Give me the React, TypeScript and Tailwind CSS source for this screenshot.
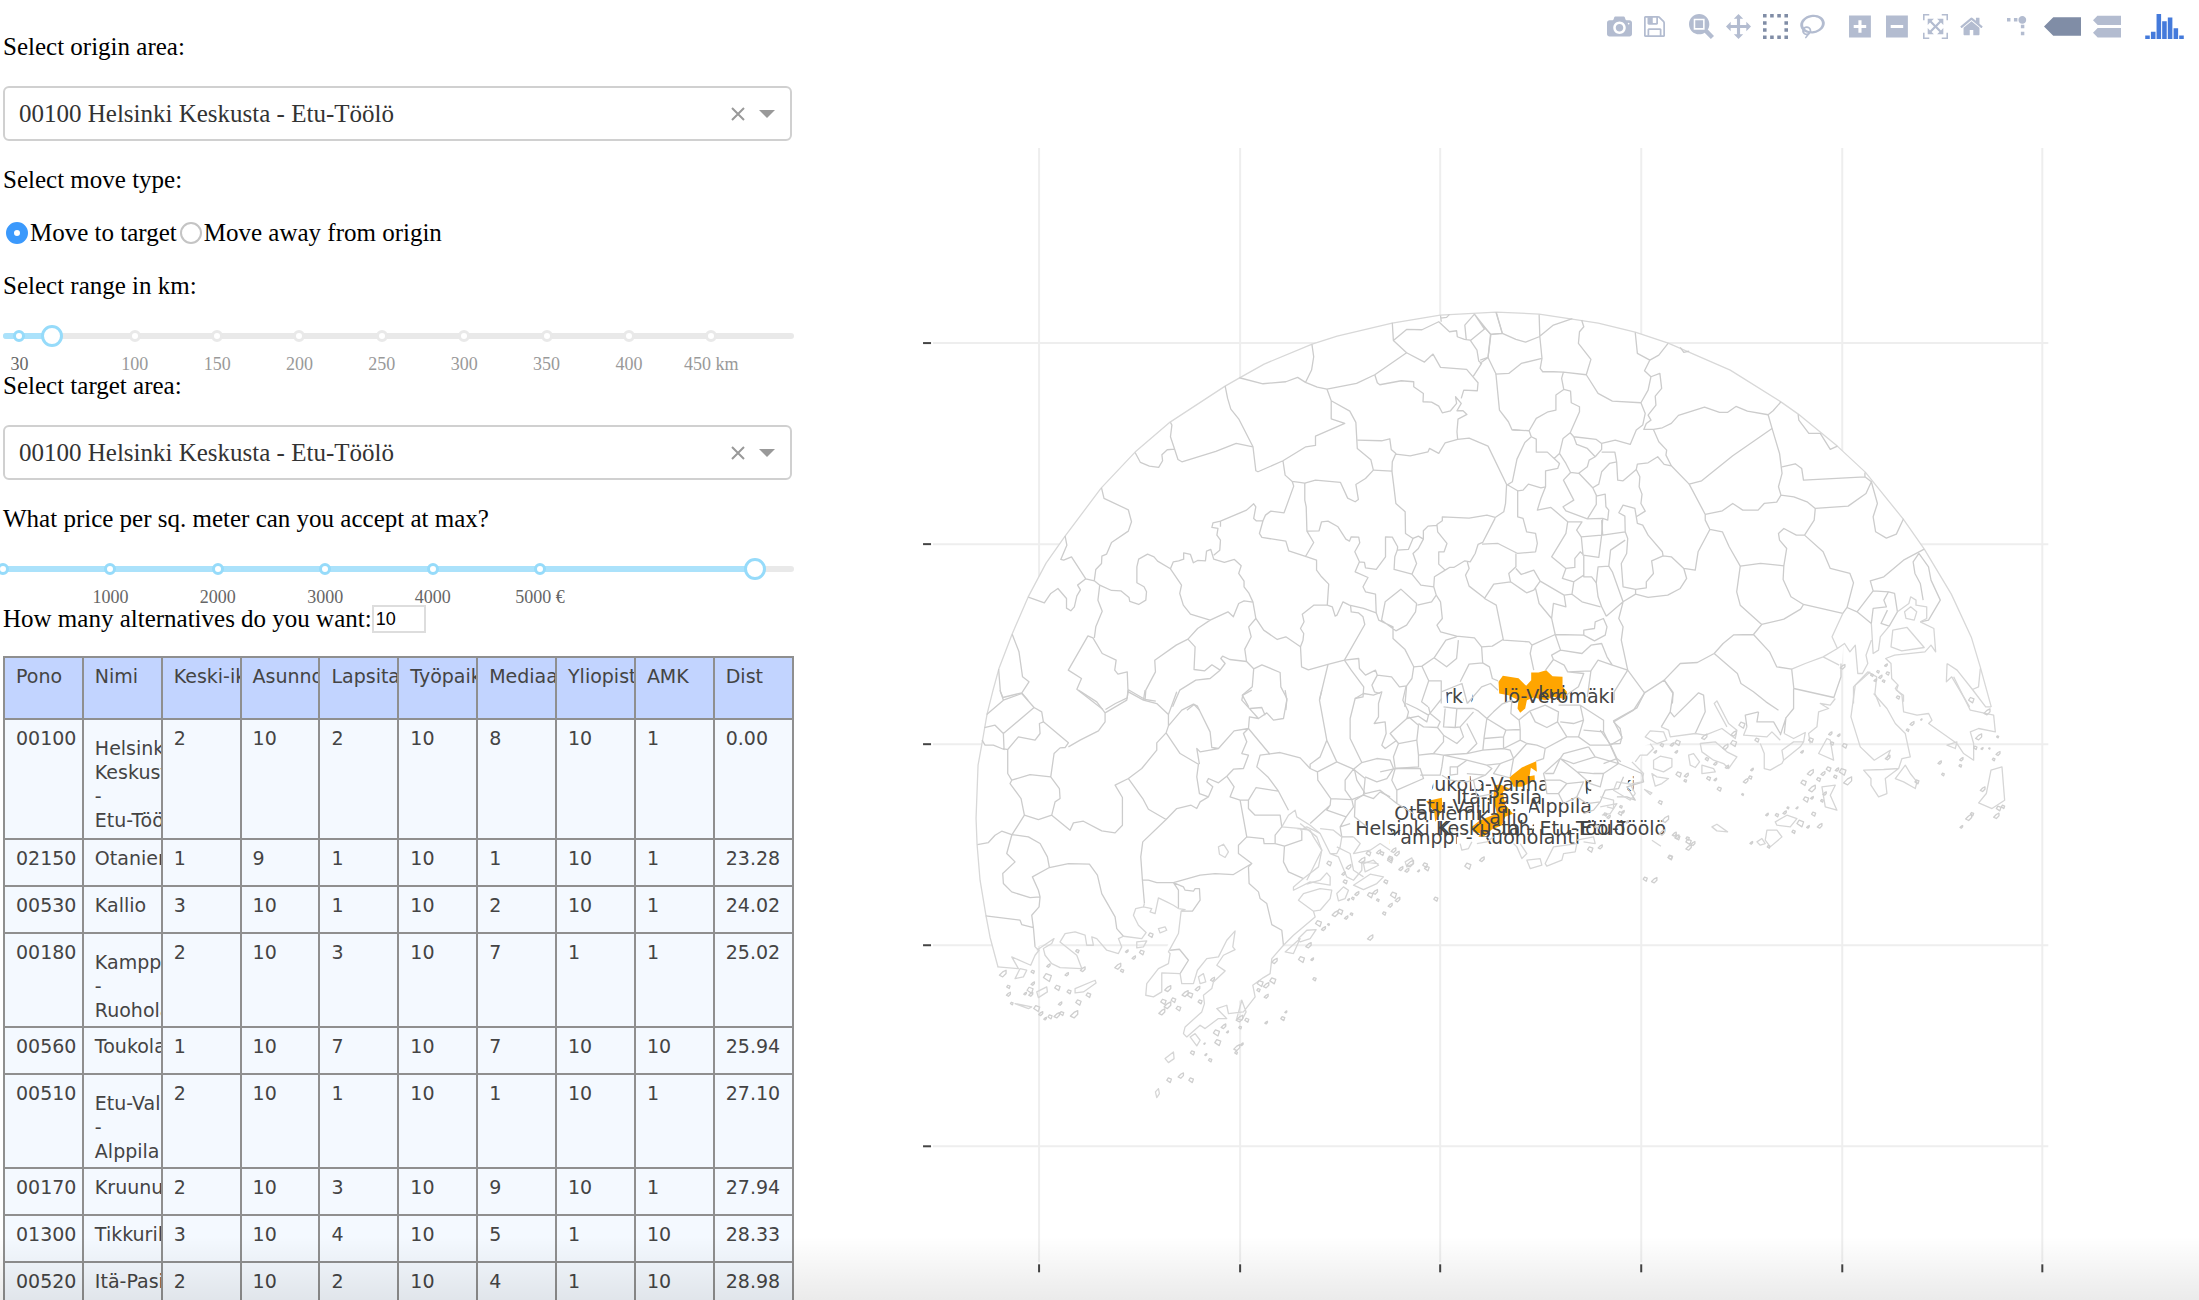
import { useState } from 'react';

const AREA = '00100 Helsinki Keskusta - Etu-Töölö';

const columns = ['Pono', 'Nimi', 'Keski-ikä', 'Asunnot', 'Lapsitaloudet', 'Työpaikat', 'Mediaanitulot', 'Yliopisto', 'AMK', 'Dist'];

const rows: { pono: string; nimi: string[]; values: string[] }[] = [
  { pono: '00100', nimi: ['Helsinki', 'Keskusta', '-', 'Etu-Töölö'], values: ['2', '10', '2', '10', '8', '10', '1', '0.00'] },
  { pono: '02150', nimi: ['Otaniemi'], values: ['1', '9', '1', '10', '1', '10', '1', '23.28'] },
  { pono: '00530', nimi: ['Kallio'], values: ['3', '10', '1', '10', '2', '10', '1', '24.02'] },
  { pono: '00180', nimi: ['Kamppi', '-', 'Ruoholahti'], values: ['2', '10', '3', '10', '7', '1', '1', '25.02'] },
  { pono: '00560', nimi: ['Toukola-Vanhakaupunki'], values: ['1', '10', '7', '10', '7', '10', '10', '25.94'] },
  { pono: '00510', nimi: ['Etu-Vallila', '-', 'Alppila'], values: ['2', '10', '1', '10', '1', '10', '1', '27.10'] },
  { pono: '00170', nimi: ['Kruununhaka'], values: ['2', '10', '3', '10', '9', '10', '1', '27.94'] },
  { pono: '01300', nimi: ['Tikkurila'], values: ['3', '10', '4', '10', '5', '1', '10', '28.33'] },
  { pono: '00520', nimi: ['Itä-Pasila'], values: ['2', '10', '2', '10', '4', '1', '10', '28.98'] },
];

const FLIP = 'matrix(1 0 0 -1 0 850)';

interface ToolIcon {
  title: string;
  width: number;
  size: string;
  path: string;
  transform?: string;
  color?: string;
}

const toolGroups: ToolIcon[][] = [
  [
    { title: 'Download plot as a png', width: 1000, size: 'w-[25px]', path: 'm500 450c-83 0-150-67-150-150 0-83 67-150 150-150 83 0 150 67 150 150 0 83-67 150-150 150z m400 150h-120c-16 0-34 13-39 29l-31 93c-6 15-23 28-40 28h-340c-16 0-34-13-39-28l-31-94c-6-15-23-28-40-28h-120c-55 0-100-45-100-100v-450c0-55 45-100 100-100h800c55 0 100 45 100 100v450c0 55-45 100-100 100z m-400-550c-138 0-250 112-250 250 0 138 112 250 250 250 138 0 250-112 250-250 0-138-112-250-250-250z m365 380c-19 0-35 16-35 35 0 19 16 35 35 35 19 0 35-16 35-35 0-19-16-35-35-35z' },
    { title: 'Save and edit plot in cloud', width: 857, size: 'w-[21px]', path: 'm214-7h429v214h-429v-214z m500 0h72v500q0 8-6 21t-11 20l-157 156q-5 6-19 12t-22 5v-232q0-22-15-38t-38-16h-322q-22 0-37 16t-16 38v232h-72v-714h72v232q0 22 16 38t37 16h465q22 0 38-16t15-38v-232z m-214 518v178q0 8-5 13t-13 5h-107q-7 0-13-5t-5-13v-178q0-8 5-13t13-5h107q7 0 13 5t5 13z m357-18v-518q0-22-15-38t-38-16h-750q-23 0-38 16t-16 38v750q0 22 16 38t38 16h517q23 0 50-12t42-26l156-157q16-15 27-42t11-49z' },
  ],
  [
    { title: 'Zoom', width: 1000, size: 'w-[25px]', path: 'm1000-25l-250 251c40 63 63 138 63 218 0 224-182 406-407 406-224 0-406-182-406-406s183-406 407-406c80 0 155 22 218 62l250-250 125 125z m-812 250l0 438 437 0 0-438-437 0z m62 375l313 0 0-312-313 0 0 312z' },
    { title: 'Pan', width: 1000, size: 'w-[25px]', path: 'm1000 350l-187 188 0-125-250 0 0 250 125 0-188 187-187-187 125 0 0-250-250 0 0 125-188-188 186-187 0 125 252 0 0-250-125 0 187-188 188 188-125 0 0 250 250 0 0-126 187 188z' },
    { title: 'Box Select', width: 1000, size: 'w-[25px]', color: '#808da6', path: 'm0 850l0-143 143 0 0 143-143 0z m286 0l0-143 143 0 0 143-143 0z m285 0l0-143 143 0 0 143-143 0z m286 0l0-143 143 0 0 143-143 0z m-857-286l0-143 143 0 0 143-143 0z m857 0l0-143 143 0 0 143-143 0z m-857-285l0-143 143 0 0 143-143 0z m857 0l0-143 143 0 0 143-143 0z m-857-286l0-143 143 0 0 143-143 0z m286 0l0-143 143 0 0 143-143 0z m285 0l0-143 143 0 0 143-143 0z m286 0l0-143 143 0 0 143-143 0z' },
    { title: 'Lasso Select', width: 1031, size: 'w-[25px]', path: 'm1018 538c-36 207-290 336-568 286-277-48-473-256-436-463 10-57 36-108 76-151-13-66 11-137 68-183 34-28 75-41 114-42l-55-70 0 0c-2-1-3-2-4-3-10-14-8-34 5-45 14-11 34-8 45 4 1 1 2 3 2 5l0 0 113 140c16 11 31 24 45 40 4 3 6 7 8 11 48-3 100 0 151 9 278 48 473 255 436 462z m-624-379c-80 14-149 48-197 96 42 42 109 47 156 9 33-26 47-66 41-105z m-187-74c-19 16-33 37-39 60 50-32 109-55 174-68-42-25-95-24-135 8z m360 75c-34-7-69-9-102-8 8 62-16 128-68 170-73 59-175 54-244-5-9 20-16 40-20 61-28 159 121 317 333 354s407-60 434-217c28-159-121-318-333-355z' },
  ],
  [
    { title: 'Zoom in', width: 1000, size: 'w-[25px]', path: 'm1 787l0-875 875 0 0 875-875 0z m687-500l-187 0 0-187-125 0 0 187-188 0 0 125 188 0 0 187 125 0 0-187 187 0 0-125z' },
    { title: 'Zoom out', width: 1000, size: 'w-[25px]', path: 'm0 788l0-876 875 0 0 876-875 0z m688-500l-500 0 0 125 500 0 0-125z' },
    { title: 'Autoscale', width: 1000, size: 'w-[25px]', path: 'm250 850l-187 0-63 0 0-62 0-188 63 0 0 188 187 0 0 62z m688 0l-188 0 0-62 188 0 0-188 62 0 0 188 0 62-62 0z m-875-938l0 188-63 0 0-188 0-62 63 0 187 0 0 62-187 0z m875 188l0-188-188 0 0-62 188 0 62 0 0 62 0 188-62 0z m-125 188l-1 0-93-94-156 156 156 156 92-93 2 0 0 250-250 0 0-2 93-92-156-156-156 156 94 92 0 2-250 0 0-250 0 0 93 93 157-156-157-156-93 94 0 0 0-250 250 0 0 0-94 93 156 157 156-157-93-93 0 0 250 0 0 250z' },
    { title: 'Reset axes', width: 928, size: 'w-[23px]', path: 'm786 296v-267q0-15-11-26t-25-10h-214v214h-143v-214h-214q-15 0-25 10t-11 26v267q0 1 0 2t0 2l321 264 321-264q1-1 1-4z m124 39l-34-41q-5-5-12-6h-2q-7 0-12 3l-386 322-386-322q-7-4-13-4-7 2-12 7l-35 41q-4 5-3 13t6 12l401 334q18 15 42 15t43-15l136-114v109q0 8 5 13t13 5h107q8 0 13-5t5-13v-227l122-102q5-5 6-12t-4-13z' },
  ],
  [
    { title: 'Toggle Spike Lines', width: 1000, size: 'w-[25px]', transform: 'matrix(1.5 0 0 -1.5 0 850)', path: 'M512 409c0-57-46-104-103-104-57 0-104 47-104 104 0 57 47 103 104 103 57 0 103-46 103-103z m-327-39l92 0 0 92-92 0z m-185 0l92 0 0 92-92 0z m370-186l92 0 0 93-92 0z m0-184l92 0 0 92-92 0z' },
    { title: 'Show closest data on hover', width: 1500, size: 'w-[37px]', color: '#808da6', path: 'm375 725l0 0-375-375 375-374 0-1 1125 0 0 750-1125 0z' },
    { title: 'Compare data on hover', width: 1125, size: 'w-[28px]', path: 'm187 786l0 2-187-188 188-187 0 0 937 0 0 373-938 0z m0-499l0 1-187-188 188-188 0 0 937 0 0 376-938-1z' },
  ],
  [
    { title: 'Produced with Plotly', width: 1542, size: 'w-[39px]', color: '#447adb', path: 'm0-10h182v-140h-182v140z m228 146h183v-286h-183v286z m225 714h182v-1000h-182v1000z m225-285h182v-715h-182v715z m225 142h183v-857h-183v857z m231-428h182v-429h-182v429z m225-291h183v-138h-183v138z' },
  ],
];

// Area borders are stored per tile, each tile with its own origin and scale
const NW = 'translate(960 290) scale(.35714 .33333)';
const NE = 'translate(1480 290) scale(.35714 .33333)';
const SW = 'translate(960 690) scale(.33333)';
const SE = 'translate(1600 560) scale(.33333)';
const MID = 'translate(1300 640) scale(.33333)';

const LAND =
  'M998 967L990 937 986 916 980 880 977 844 976 818 978 765 982 743 987 714 993 690 999 668 1012 634 1028 597 1046 563 1065 536 1101 488 1135 452 1170 422 1225 386 1239 378 1264 364 1312 344 1337 336 1392 323 1440 315 1496 312 1539 314 1572 319 1598 323 1635 332 1668 343 1730 370 1781 402 1798 414 1837 446 1865 472 1903 519 1924 549 1951 594 1971 637 1980 667 1991 707';
const COAST =
  'L1930 700 1900 650 1843 645 1840 690 1820 720 1800 736 1735 733 1672 738 1645 745 1636 770 1600 800 1520 840 1440 842 1380 860 1340 890 1310 920 1283 945 1270 975 1240 1000 1185 1035 1200 1000 1180 980 1145 995 1170 940 1120 935 1100 940 1090 930 1040 945Z';

const borders = [
  {
    tile: NW,
    d: 'M782 263L848 281 912 275 945 262 967 277 1000 291 1027 297 1110 280 1161 254 1250 188 1213 151 1210 98M985 163L990 200 984 240 967 277M742 287L749 325 758 357 781 388 820 470 828 542 834 545 904 512 968 470 995 466 995 438 1077 400 1039 386 1039 332 1027 297M1039 332L1091 363 1108 397 1112 475 1150 509 1157 540 1135 565 1108 583 1115 628 1106 635 1085 624 1065 577 995 570 965 579 930 574 910 555 904 512M820 470L773 460 716 484 621 515 610 508 600 475 589 440 593 405 589 397M490 487L505 517 530 528 556 532 567 512 565 494 580 479 600 477M396 593L403 625 471 659 480 695 471 723 424 757 410 792 397 798 396 820 380 838 376 870M294 737L299 765 282 808 290 810 312 800 352 866 376 872 391 885M191 921L236 938 254 910 274 895 298 925 298 954 310 962 320 950 327 917 337 899 329 885 352 866',
  },
  {
    tile: NW,
    d: 'M391 885L424 901 450 902 473 922 475 934 500 943 520 930 522 905 515 890 495 878 495 830 500 807 525 792 543 800 553 813 589 836 597 815 612 812 626 807 626 788 645 793 653 818 665 811 687 812 690 783 702 778 710 807 740 817 768 808 787 827 780 850 795 873 795 890 808 908 820 936 828 985M710 795L727 780 729 750 719 735 722 715 705 712 708 698 729 693 802 660 822 641 828 650 822 685 829 692 848 692 838 730 845 742 912 753 920 782 967 799 990 757 971 723 969 650 965 630 965 579M729 693V710M848 692L855 675 870 663 907 668 934 588 930 574M971 723L1005 722 1012 695 1030 693 1058 710 1080 747 1090 753 1095 740 1116 741 1119 758 1105 785 1118 815 1106 845 1142 862 1128 890 1135 905 1163 912 1165 968 1130 955 1090 945 1072 935 1055 975 1050 978 1042 950 1028 945 990 945 958 972 963 995 953 1015 962 1030 960 1050 953 1070 956 1130 975 1139 1030 1123 1076 1110 1133 1003 1128 980 1115 968 1095 965 1093 945M967 799L998 810 998 840 1012 860 1032 882 1028 945M1118 815L1132 817 1135 833 1165 838 1191 800 1191 740 1210 741 1225 770 1224 780 1255 778 1268 745 1247 730 1246 665 1220 640 1215 595 1209 543 1157 540',
  },
  {
    tile: NW,
    d: 'M1209 543L1210 515 1220 490 1207 478 1203 446 1180 452 1112 450M1220 492L1260 497 1310 485 1314 475 1340 490 1358 458 1393 448 1425 444 1478 468 1530 583M1393 448L1391 425 1394 387 1419 373 1408 362 1391 362 1403 340 1387 320 1390 340 1373 362 1350 368 1340 348 1320 336 1296 335 1297 310 1270 290 1270 275 1235 272 1175 284 1168 278 1161 254M1403 325L1410 300 1448 302 1450 278 1418 238 1345 232 1324 192 1300 216 1250 188M1213 151L1250 118 1293 119 1340 95 1370 125 1390 122 1392 140 1412 148 1428 150 1447 180 1452 213 1460 220 1437 258M1428 152L1468 117 1440 72 1413 105 1417 148M1440 72L1485 133 1478 202 1500 251 1510 360 1535 395 1545 419 1568 421M1485 133L1518 130 1500 66M1478 202L1455 220M1345 76L1347 95M1370 73L1362 82 1345 84M1530 583L1527 640 1522 665 1498 682 1475 675 1425 684 1350 680 1350 692 1335 703 1337 725 1363 760 1355 785 1340 785 1340 822 1358 840 1328 860 1326 890 1333 915 1320 935 1280 945M1498 684L1463 757 1450 763 1442 790 1428 815 1413 812 1382 832 1370 832 1358 840M1335 706L1310 708 1297 722 1297 747 1283 738 1268 745M1297 747L1283 775 1268 790 1278 820 1265 852 1290 885 1326 890M1265 852L1215 838 1217 800 1224 780',
  },
  {
    tile: NW,
    d: 'M1470 925L1425 888 1415 855 1425 835 1420 815M1520 1048L1490 1068 1460 1070 1440 1043 1390 1038 1345 1025 1335 1005 1350 985 1345 935 1333 915M1234 897L1190 935 1180 990 1220 1022 1250 1005 1275 965 1278 940ZM1165 968L1172 990 1212 1010 1212 1045 1245 1077 1270 1130 1265 1165 1248 1190M1390 1040L1360 1050 1327 1103 1293 1128 1270 1130M1327 1103L1362 1130 1390 1105 1395 1050M1460 1070L1463 1118 1425 1122 1400 1175M1463 1118L1482 1130 1490 1165 1506 1172M589 836L620 885 615 910 625 945 645 972 700 990 750 965 765 980 780 940 795 932 820 936M700 990L665 1015 638 1047 658 1070 655 1138 685 1142 705 1124 728 1140 742 1120 730 1105 735 1098 755 1108 802 1114 797 1077 815 1040 808 1010 828 985 850 1020 888 1048 912 1040 953 1070M802 1114L822 1136 845 1124 896 1147 898 1190 915 1225 912 1260M822 1136L818 1190 790 1215 808 1250M638 1047L605 1065 545 1110 547 1145 520 1200 518 1228 470 1198 468 1145 442 1152 433 1140 437 1110 398 1090 372 1043 358 1037 303 1140 340 1165 327 1197 400 1258M470 1198L468 1223 435 1240 407 1258M391 885L386 930 398 963 380 1010 376 1043M728 1140L700 1165 660 1170 615 1200 595 1250M518 1228L548 1233M146 1032L165 1085 175 1160 193 1175 173 1208 120 1222M173 1208L190 1230M108 1137L113 1205 120 1222M1030 1123L1006 1230M1076 1110L1095 1140 1130 1190 1128 1220 1105 1225M1076 1110L1116 1105 1118 1135 1135 1155 1163 1140 1168 1155 1208 1160 1230 1190 1250 1187 1245 1250M1168 1155L1153 1185 1160 1205 1175 1210M635 1260L655 1243 670 1260M1293 1128L1312 1172 1347 1172 1347 1240M1312 1172L1292 1235 1310 1250M1347 1205L1405 1180 1420 1240M1420 1240L1460 1190 1485 1180 1506 1200',
  },
  {
    tile: NE,
    d: 'M0 210L22 202 30 133 62 130 100 148 127 156 165 140 205 105 258 86M165 73L167 140 173 205 115 220 80 250 43 252M45 66L62 130M30 133L10 110M173 205L168 235 175 245 205 245 233 246 228 265 234 298 212 315 212 360 190 365 157 385 137 422 90 419M233 246L297 254 310 208 275 160 278 125 290 110 284 90M297 254L330 310 370 333 450 338 470 300 478 260 460 242 475 210 440 190 434 127M475 210L500 195 526 160M478 260L503 250 508 295 490 318 492 345 470 375 478 390 465 400 458 418 485 418 510 413 535 400 555 376 628 351 670 367 692 367 716 349 748 363 806 374 817 415 707 497 620 572 585 582 535 527 520 495 522 480 500 455 485 418M450 338L462 370 455 405 437 420 420 463 378 450 340 460 325 448 262 440 252 428 278 365 278 350 255 338 253 303 234 298M137 422L143 440 157 447 157 486 188 486 207 505 222 490 232 445 252 428M143 440L125 457 103 507 90 575 75 585M207 505L222 520 217 535 183 542 183 590 170 593 135 582 120 600 105 602 75 583M222 490L240 520 253 547 275 550 300 530 305 510 322 500 340 478 340 460M262 440L270 463 300 475 322 500M340 486L377 486 382 515 362 520 340 545 332 582 315 593 275 548M253 547L233 570 262 630 232 650 240 662 300 686 325 643 325 615 315 593M325 618L350 612 352 650 360 660 357 690 343 685 300 686M382 515L385 570 400 572 437 538 440 522 470 518 497 500 515 523 535 527',
  },
  {
    tile: NE,
    d: 'M437 538L447 560 445 590 453 612 450 640 462 663 437 680 433 655 400 645 388 668 405 678 406 725 343 735 340 690M437 680L440 700 455 705 470 735 510 785 512 797 535 800 570 835 602 840 610 785 643 718 630 690 630 673 585 582M512 797L480 812 485 850 465 875 465 893 435 898 400 890 395 820 410 790 413 745 406 725M406 750L365 780 360 828M630 673L678 662 707 640 735 660 778 660 795 640 830 636 842 615 835 590 845 550 838 490 817 415M842 615L878 620 915 635 938 655 935 690 908 735 885 735 850 715 835 730 838 750 858 775 850 827 785 820 728 828 697 770 678 725 643 718M938 655L1030 648 1080 610 1095 575 1077 560 905 570 900 535 882 521 845 530M1077 547V560M1095 575L1112 640 1100 680 1107 725 1137 744 1165 732 1185 686M908 735L960 785 980 835 1035 850 1045 878 1027 952 1015 970 905 943 870 920 848 868 850 827M905 943L897 957 850 987 788 1003 728 945 718 905 728 828M788 1003L765 1033 810 1085 830 1130 872 1137 878 1195 990 1222 1010 1160 1010 1120M765 1033L710 1034 680 1060 655 1090 608 1117 560 1120 515 1170 460 1208 413 1140 395 1050 400 1010 388 985 400 935 353 978M655 1090L720 1150 730 1180 765 1205 800 1235 835 1260M515 1170L540 1207 538 1240M806 374L820 362 842 335M890 373L892 390 920 430 952 430 980 478 1000 468M560 172L570 187 585 183M435 898L435 912 400 935 370 845 360 828 330 830 325 878 330 920 340 950 353 978M435 912L470 922 525 915 560 895 578 865 570 835M105 602L105 680 120 685 130 725 155 730 160 760 155 785 105 790 50 760 5 762',
  },
  {
    tile: NE,
    d: 'M183 590L170 625 160 660 198 652 245 695 240 730 200 800 240 835 265 832 265 805 280 785 290 795 290 860 312 860 325 878M245 695L285 695 270 720 283 740 288 795 332 802 340 735 283 740M343 685L340 735M240 835L230 865 262 875 290 855M262 875L257 912 235 915 168 873 150 900 130 908 85 875 80 850 100 830 100 790M100 835L115 853 150 840 168 873M85 875L38 882 12 925 45 945 65 1050 137 1055 145 1065 210 1033 200 985 165 940 155 895M257 912L285 935 337 950M235 915L240 950 205 940 200 985M210 1033L290 1035 290 1020 320 1015 322 995 345 985 355 1010 350 1035 320 1052 290 1035M210 1033L225 1080 285 1090 310 1065 340 1060 355 1100 370 1125 413 1140M145 1065L140 1090 150 1140M225 1080L200 1095 205 1108 183 1140M205 1108L235 1125 245 1145 310 1142 330 1110 370 1125M310 1142L300 1220M245 1145L290 1150 275 1190 240 1215M413 1140L375 1205 375 1230M1243 777L1185 810 1130 860 1092 872 1100 902 1055 965 1027 952M1228 790L1212 815 1217 850 1232 880 1240 930M1228 790L1255 830 1262 870 1288 930 1255 990 1232 995M1100 902L1143 905 1130 930 1137 950 1100 955 1095 1000 1055 965M1143 905L1160 910 1168 965 1145 1008 1122 1000 1140 960',
  },
  {
    tile: SW,
    d: 'M120 0L130 30 80 73M130 30L185 10 222 52 130 130 105 105 73 112M222 52L245 65 250 95 325 158 315 172 300 173 282 190 272 260 210 253 155 270M130 130L132 178 100 165 75 165 66 150M155 270L143 250 143 178 130 175M143 178L175 140 225 150 240 130 238 100 250 95M325 170L360 150 415 122 435 95 435 68 410 35 355 0M435 68L500 30 505 0M505 5L550 30 555 0M550 30L590 40 625 73 650 5M625 73L625 107 665 60 700 42 712 48 750 125 755 172 775 175 822 122 865 115 868 80 895 85 845 30 848 15 875 0M895 85L920 68 940 90 970 85 980 30 975 0M870 55L905 52 915 75M625 107L618 128 590 158 590 180 545 235 505 265 465 285 487 322 487 405 465 428 425 422 370 393 340 398 330 420 275 375 235 388 193 375 155 435M618 128L660 190 715 222 710 260 718 310 745 320M775 175L720 185 710 175 718 222M865 115L850 130 860 155 845 190 865 195 850 235 820 237 800 258 775 278 745 265 740 275 758 290 745 320 720 335 710 355 693 345 650 355 618 388 565 357 548 325 505 265M618 388L548 455 542 500 547 570 553 640M490 738L470 715 465 680 425 610 412 555 388 522 325 520 268 532 262 500 240 460 205 440 155 433 125 423 105 435 85 457 52 463M155 270L150 280 183 325 193 375M272 260L298 295 300 325 285 335 275 375M155 435L140 490 165 515 128 550 130 580 155 605 210 622 240 620 235 600 217 560 268 532M240 620L237 650 215 675 220 712 185 703 180 690 77 677M220 712L225 770',
  },
  {
    tile: SW,
    d: 'M547 570L565 570 590 577 640 577 720 555 765 550 820 553 875 520 835 490 835 465 860 440 840 330 810 320 822 290 800 258M840 330L865 330 865 355 885 375 960 375 965 410 945 435 945 460 912 460 910 445 860 440M865 330L888 292 955 303 985 360M955 303L925 262 890 230 900 195 960 187 1020 203 1050 235 1072 245 1073 270 1112 325 1110 345 1050 400M865 115L930 193M1050 235L1050 222 1080 200 1100 150 1078 30 1085 0M1100 150L1130 215 1180 237 1205 217 1170 145 1170 85 1185 25 1210 10M1130 215L1072 245M1180 237L1155 270 1155 300 1175 328 1112 325M1180 237L1215 265 1210 315 1175 328 1180 350 1158 380 1100 360 1110 345M640 577L655 600 655 655M663 663L697 663 720 630 718 595 705 595 700 603 675 600 670 590 640 577M865 530L867 580 895 605 900 625 920 640 935 703 965 720 970 765M875 520L865 530M945 460L973 468 970 515 985 545 1030 565M973 468L1025 450 1025 420M630 780L658 777 685 810 660 850M1158 380L1140 410 1145 440 1180 440M1140 410L1170 400M1210 10L1240 15 1265 5 1255 40 1255 80 1242 100 1275 95 1278 130 1265 165 1275 175 1310 150M1205 217L1250 205 1290 210 1300 235 1280 265 1250 275 1215 260M1210 315L1240 325 1260 305 1290 320',
  },
  {
    tile: SE,
    d: 'M132 400L110 443 40 482 65 530 60 550 30 552 0 510M30 552L50 595 10 610M62 605L50 595M218 400L210 455 183 500M285 520L315 455 310 405 295 398 222 470 210 455M218 400L192 360M475 455L435 465 440 500M475 455L470 485 520 485 540 520M580 385L580 445 557 473 540 525M557 473L552 520',
  },
  {
    tile: MID,
    d: 'M318 137L308 180 325 215 320 235 270 280 295 310 350 300 355 255 325 230M320 235L355 228 380 245 385 225 350 205 318 190M385 225L405 200 425 175M385 200L390 220 420 245 412 262 370 260 355 250M412 262L430 285 430 305 400 340 355 345 350 300M295 310L280 350 285 385 355 380 355 345M430 200L470 205 520 205 535 213 560 235 552 290 548 330 500 340 430 345 400 340M560 235L617 270 660 268 657 240 632 220 635 180 605 192 580 215ZM470 205L465 262 430 260 435 205M465 262L480 260 520 215M430 285L470 310 490 290 480 262M500 250L530 310 500 340M552 295L610 290 617 270M610 290L610 325 548 330M655 240L690 212 735 195 775 215 772 245 740 262 705 245 690 215M775 195L840 195 850 240 820 250 780 245M772 245L800 290 835 290 850 240 M840 195L910 240 910 275 850 270M660 268L660 300 610 325 630 330 640 355 600 370 560 375 500 360 430 345 425 380M660 300L680 310 710 315 735 325 730 355 708 363M680 310L640 355M735 325L800 290M835 290L870 315 930 315 965 295 960 265 940 245M910 275L930 315 955 370 885 350 865 320M780 355L730 400 735 420M780 355L820 370 885 350M865 320L790 340 780 355M955 370L910 400 880 400 830 395 780 355M910 400L900 440 870 430 830 395M940 245L1000 210 1035 155',
  },
  {
    tile: MID,
    d: 'M240 395L285 385 275 420 290 450 370 415 360 385 285 385M360 405L420 405 425 380M450 380L472 380 472 402 450 405ZM472 380L500 360M500 400L555 405 575 385 560 375M425 405L450 420 500 425 520 420 555 405 M163 388L170 420 195 460 165 480 163 530 200 560M195 460L240 450 290 490 340 520M290 450L290 490M780 420L800 430 775 460 740 460 735 420 780 420M800 430L850 425 830 470 790 490 775 460M830 470L860 490 900 485 915 450 955 445 970 410M900 485L880 510 850 520M955 370L1025 400 1030 425 980 440 1005 480 980 470 950 470M780 355L760 400 735 400M640 355L630 410M520 420L530 470 580 460M600 370L580 400 627 412',
  },
];

const shores = [
  {
    tile: NE,
    d: 'M1168 965L1200 940 1205 920 1220 930 1220 945 1250 950 1250 985 1232 995M1188 965L1205 950 1222 965 1215 990 1192 985ZM1155 1020L1195 1012 1243 1072 1180 1082 1150 1070ZM1232 995L1270 1015 1275 1085 1262 1065 1245 1085 1160 1095 1135 1105 1150 1120 1152 1165 1170 1185 1165 1200 1185 1215 1185 1235M1145 1008L1120 1040 1115 1080 1100 1090 1095 1000M1015 970L985 1040 1000 1075 1020 1060 1035 1085 1050 1065 1057 1150 1070 1150 1085 1120 1080 1095 1095 1050M1000 1075L960 1100 910 1120 872 1137M960 1100L1005 1125M1045 1240L1045 1190 1085 1145 1110 1160 1105 1210 1120 1250M1307 1120L1335 1140 1378 1198 1395 1190 1400 1135M1307 1120L1305 1175 1320 1160 1370 1250M1430 1250L1415 1250 1378 1198',
  },
  {
    tile: SW,
    d: 'M553 640L550 650 527 655 520 675 535 705 558 727 545 745 490 738M655 655L640 645 620 635 595 623 585 670 570 665 575 655 550 650M655 655L675 658 663 663 655 730 625 785 630 790 625 820 595 835 560 880 557 915 580 920 605 905 605 848 660 850 665 880 700 880 712 840 740 805 775 800 800 750 825 722 818 770 825 778 790 795 770 825 795 842 760 875 755 895 730 915 733 940 725 965 675 1010 670 1030 680 1040 720 1005 735 1015 775 985 800 985 770 955 800 945 805 970 850 965 885 920 878 885 910 862 930 850 935 805 970 765 1000 735 1065 680 1060 663 1015 630 1030 610 1080 595 1115 600 1110 625 1080 660 1060 663M1030 565L1000 590 1000 600 1050 575 1110 585 1110 560 1100 548 1080 570 1040 582M965 410L985 375 1005 360 1010 380 1050 405 1080 430 1110 490 1135 500 1160 560 1180 570 1205 540 1205 515 1255 520M965 410L1025 415M1030 565L1075 530 1085 480 1060 440 1050 420 1010 415M1080 415L1120 420 1145 440 1140 470 1130 490 1110 490M1180 440L1200 460 1180 490 1230 480 1260 460 1290 480M225 770L237 780 225 795 212 825 155 800 175 835 113 830M230 780L282 745 275 760 250 775 255 795 275 820 300 832 365 835 350 795 300 755 315 730 345 725 375 735 380 765 400 765 395 740 410 745 440 780 475 790 485 770 475 745 490 738M165 865L180 835 200 840 190 860ZM165 940L215 950 205 955ZM230 905L260 890 262 905 235 922ZM345 895L405 870 408 878 370 905 345 908ZM775 470L790 462 805 485 795 502 778 492ZM1180 585L1230 552 1270 560 1250 580 1210 598ZM1130 610L1150 590 1165 600 1155 625 1135 632ZM975 785L1020 745 1000 790ZM1015 745L1040 720 1068 718 1050 745 1020 755ZM530 755L560 752 550 770 530 773ZM615 1105L640 1085 642 1105 625 1117ZM586 1205L595 1195 598 1210 590 1222ZM595 715L615 710 620 720 600 728ZM830 985L845 930 858 965 845 990ZM690 1040L705 1030 720 1050 710 1067ZM715 860L730 850 737 875 720 880ZM1210 520L1240 510 1255 525 1215 545ZM1335 515L1355 503 1360 520 1340 530Z',
  },
  {
    tile: SE,
    d: 'M183 500L205 510 210 530 285 520 315 525 365 505 385 520 405 535 410 510 385 490 350 422 342 430 380 500M440 500L430 525 500 530 515 515 540 540 M552 520L580 535 615 517 610 545M705 415L690 435 660 430 685 445 655 455 650 500 625 520 630 550M480 550L492 580 492 625 510 630 545 610 550 600 600 560 610 545 580 545 545 570 550 600M810 335L765 375 752 470 780 560 822 600 870 570 860 595M820 400L860 445 885 490 915 520 930 590 905 595 895 625 850 628 790 630 812 655 812 675 835 710 860 700 855 655 895 625M892 375L885 385 905 405 910 455 950 465 985 460 995 480 985 490 1070 550 1090 580 1120 600 1120 550 1110 515 1135 505 1185 515 1180 465 1110 450 1060 350M885 655L915 615 930 640 950 665 945 685 910 665ZM1172 630L1205 620 1213 720 1175 745 1135 728 1158 700ZM655 580L680 535 690 540 700 600ZM665 680L705 675 690 705 710 750 675 740ZM1040 555L1070 545 1065 565ZM135 530L150 512 190 515 200 540 170 550ZM150 550L160 565 140 585 120 585 105 605M160 600L180 588 215 595 215 620 190 635 160 625ZM155 640L170 650 205 655 185 670 165 678ZM300 550L345 545 380 575 410 590 385 625 370 610 340 600 305 575ZM265 585L280 580 298 605 285 622 270 615ZM305 615L340 625 345 635 305 640ZM40 690L50 665 90 672 105 700 90 720ZM95 605L130 640 125 665 90 672M0 710L40 720 40 745 20 740M335 800L350 792 382 815 350 812ZM525 785L560 765 590 775 570 800 530 795ZM500 810L530 810 545 830 510 860 495 840ZM470 845L485 835 495 850 480 855ZM155 840L182 858M133 688L155 698 150 703Z',
  },
  {
    tile: MID,
    d: 'M480 610L485 630 505 625 515 605M530 610L560 605 580 590M640 610L650 620 665 655 680 640 660 610M735 670L760 620 830 610 825 635 790 640 785 660 740 678ZM680 660L720 655 725 675 690 685ZM830 600L880 590 885 610 850 605M900 500L950 490 930 520 905 525M0 550L50 590 65 630 20 720M0 570L20 560 60 580M110 620L150 640 160 690 190 710',
  },
];

const islets: { tile: string; points: number[][] }[] = [
  {
    tile: SW,
    points: [
      [128, 850, 10], [145, 890, 5], [145, 912, 6], [155, 940, 4], [195, 910, 4], [210, 900, 9], [212, 912, 6], [218, 845, 5], [218, 880, 5], [230, 955, 9], [242, 970, 6], [262, 862, 12], [265, 826, 5],
      [292, 893, 8], [320, 852, 5], [327, 905, 6], [300, 940, 5], [355, 937, 8], [342, 972, 11], [305, 970, 6], [290, 975, 8], [270, 980, 6], [255, 985, 4], [385, 915, 7], [368, 837, 7], [352, 783, 5],
      [473, 828, 9], [486, 842, 5], [521, 802, 5], [545, 787, 7], [500, 783, 4], [572, 735, 7], [623, 895, 9], [610, 935, 8], [622, 945, 10], [640, 930, 7], [605, 965, 9], [655, 955, 7], [675, 910, 9], [690, 915, 8], [712, 895, 7], [720, 935, 6], [757, 867, 6],
      [769, 1028, 9], [790, 1008, 7], [840, 1012, 4], [838, 985, 10], [860, 990, 6], [802, 1025, 3], [773, 1057, 9], [733, 1060, 2], [697, 1088, 6], [737, 1093, 3], [750, 1110, 5], [830, 1072, 9], [828, 1088, 4], [845, 1062, 4], [627, 1170, 7], [662, 1156, 8], [693, 1170, 7],
      [918, 997, 4], [968, 985, 6], [977, 965, 3], [900, 880, 9], [918, 885, 8], [938, 872, 9], [918, 918, 6], [895, 900, 5], [943, 812, 8], [1024, 808, 9], [1056, 807, 4], [1063, 867, 5], [1045, 765, 8], [1075, 700, 9], [1090, 715, 6], [1105, 703, 3], [1125, 670, 9], [1140, 665, 8], [1158, 682, 5], [1174, 672, 4], [1230, 742, 8], [1272, 670, 5],
      [1165, 628, 3], [1178, 625, 4], [1190, 610, 6], [1230, 615, 8], [1245, 605, 7], [1253, 630, 4], [1290, 645, 6], [1300, 615, 9], [1312, 628, 7], [1277, 575, 6], [1322, 535, 6], [1107, 520, 7], [1150, 550, 5], [1155, 575, 6], [1255, 485, 6], [1290, 505, 7], [1310, 490, 7], [1395, 525, 7], [1375, 542, 3], [1427, 627, 6],
    ],
  },
  {
    tile: SE,
    points: [
      [165, 575, 4], [185, 555, 5], [215, 553, 5], [232, 548, 8], [228, 575, 4], [235, 643, 8], [258, 645, 6], [255, 662, 4], [312, 530, 8], [325, 655, 6], [345, 658, 4], [357, 687, 6], [375, 560, 8], [400, 550, 9], [400, 520, 8], [425, 495, 9], [345, 610, 5], [320, 597, 5], [380, 620, 5],
      [427, 703, 3], [436, 662, 7], [450, 652, 5], [455, 628, 4], [470, 540, 6], [605, 575, 4], [632, 540, 7], [690, 520, 5], [695, 550, 5], [715, 525, 4], [733, 557, 7], [630, 637, 9], [610, 668, 8], [635, 685, 10], [655, 658, 6], [668, 640, 6], [685, 627, 7], [710, 628, 5], [727, 635, 10], [742, 662, 12], [705, 650, 5], [673, 700, 5], [617, 718, 8], [635, 713, 4], [665, 722, 4],
      [590, 743, 3], [563, 743, 3], [553, 757, 5], [530, 765, 5], [500, 763, 4], [640, 762, 6], [658, 797, 7], [600, 790, 10], [623, 800, 4], [580, 815, 5], [453, 848, 4], [505, 860, 4], [195, 777, 10], [180, 727, 6], [222, 822, 6], [232, 832, 7], [265, 862, 8], [262, 835, 5], [278, 850, 6], [210, 892, 7], [162, 960, 8], [62, 740, 4], [68, 755, 4], [15, 763, 5],
      [727, 320, 7], [815, 345, 4], [825, 360, 4], [833, 335, 4], [840, 350, 5], [850, 363, 4], [857, 315, 4], [862, 340, 5], [862, 592, 7], [893, 412, 5], [935, 490, 6], [922, 510, 4], [963, 478, 2], [1113, 420, 8], [1160, 455, 9], [1192, 530, 3], [1135, 530, 9], [1125, 563, 5], [1145, 565, 3], [1167, 565, 2], [1193, 580, 6], [1180, 598, 4], [1083, 597, 5], [1080, 617, 4], [1018, 607, 5], [1028, 643, 4], [1147, 687, 7], [1195, 745, 7], [1188, 767, 8], [1208, 740, 5], [1105, 772, 9], [1115, 762, 5], [1083, 800, 4], [950, 665, 6],
    ],
  },
  {
    tile: MID,
    points: [
      [545, 657, 7], [503, 678, 9], [330, 670, 10], [380, 685, 7], [320, 690, 6], [270, 660, 8], [280, 630, 7], [245, 640, 6], [185, 660, 9], [205, 640, 7], [145, 680, 7], [870, 628, 8], [900, 620, 6], [890, 560, 6], [925, 530, 5], [960, 520, 6], [1085, 577, 8], [1110, 652, 6], [980, 545, 4], [1035, 717, 6], [1130, 590, 6], [1165, 605, 8],
    ],
  },
];

const isletPath = (points: number[][]) =>
  points
    .map(([x, y, r], i) =>
      i % 2
        ? `M${x - r} ${y}L${x - r / 3} ${y - r} ${x + r} ${y - r / 2} ${x + r / 2} ${y + r}Z`
        : `M${x - r} ${y + r / 2}L${x} ${y - r / 2} ${x + r} ${y - r} ${x + r} ${y} ${x} ${y + r}Z`
    )
    .join('');

const targets = [
  'M595 125L608 107 655 114 678 137 693 120 693 97 715 97 738 90 757 108 787 110 787 140 800 155 800 178 760 170 735 180 700 172 680 180 675 205 660 218 652 205 655 180 625 165 597 160Z',
  'M627 412L665 382 708 363 710 395 692 383 688 408 703 405 704 420 665 440 640 440Z',
  'M582 435L600 433 627 445 608 455 612 480 640 510 640 520 615 530 605 555 575 568 550 590 545 612 530 600 540 580 520 575 515 560 540 540 590 520 585 500 580 470Z',
  'M378 483L425 473 427 505 415 530 405 545 402 515Z',
];

const mapLabels = [
  { text: 'rko', x: 1444, y: 703 },
  { text: 'lö-Veromäki', x: 1503, y: 703 },
  { text: 'kui', x: 1538, y: 700 },
  { text: 'Toukola-Vanhakaupunki', x: 1414, y: 791 },
  { text: 'Etu-Vallila - Alppila', x: 1415, y: 813 },
  { text: 'Kamppi - Ruoholahti', x: 1388, y: 844 },
];

// Labels of areas that nothing is painted over
const topLabels = [
  { text: 'Itä-Pasila', x: 1456, y: 804 },
  { text: 'Otaniemi', x: 1394, y: 820 },
  { text: 'Kallio', x: 1477, y: 824 },
  { text: 'Helsinki Keskusta - Etu-Töölö', x: 1355, y: 835 },
];

// Neighbouring areas that are painted over parts of the labels
const covers =
  'M335 400L405 400 400 425 392 462 335 462ZM735 400L850 400 858 460 870 465 740 465ZM873 400L985 400 980 462 873 465ZM1000 400H1020V465H1000ZM612 490L690 490 685 525 640 522ZM262 560L285 590 310 612 270 620ZM470 590L492 590 490 615 470 615ZM530 590L560 590 550 620 530 620ZM510 400L545 430 530 455 515 450ZM430 150L438 150 441 195 430 195ZM485 150L520 150 510 200 492 195Z';

const gridX = [1039, 1240, 1440, 1641, 1842, 2042];
const gridY = [343, 544, 744, 945, 1146];

function AreaSelect({ id, label }: { id: string; label: string }) {
  const [value, setValue] = useState(AREA);
  return (
    <>
      <label htmlFor={id} className="block">{label}</label>
      <div className="relative mr-[2px]">
        <select
          id={id}
          value={value}
          onChange={e => setValue(e.target.value)}
          className="block h-[55px] w-full appearance-none rounded-md border-2 border-[#d0d0d0] bg-white px-[14px] text-[#333]"
        >
          <option value="">Select...</option>
          <option value={AREA}>{AREA}</option>
        </select>
        <div className="pointer-events-none absolute inset-y-0 right-[17px] flex items-center gap-[14px]">
          <button type="button" aria-label="Clear value" onClick={() => setValue('')} className="pointer-events-auto">
            <svg viewBox="0 0 14 14" className="block size-[14px]" stroke="#999" strokeWidth="2">
              <path d="M1 1L13 13M13 1L1 13" />
            </svg>
          </button>
          <svg viewBox="0 0 16 8" className="block h-2 w-4" fill="#999">
            <path d="M0 0H16L8 8Z" />
          </svg>
        </div>
      </div>
    </>
  );
}

interface RangeSliderProps {
  id: string;
  label: string;
  min: number;
  max: number;
  initial: number;
  marks: { at: number; text: string }[];
}

function RangeSlider({ id, label, min, max, initial, marks }: RangeSliderProps) {
  const [value, setValue] = useState(initial);
  const percent = (v: number) => `${((v - min) / (max - min)) * 100}%`;

  return (
    <div className="relative h-[47px]">
      <div className="flex h-[22px] items-center">
        <div className="h-[6px] flex-1 rounded-full bg-[#e9e9e9]">
          <div className="h-full rounded-full bg-[#abe2fb]" style={{ width: percent(value) }} />
        </div>
      </div>
      {marks.map(mark => (
        <div key={mark.at} className="absolute top-[5px] flex w-24 -translate-x-1/2 flex-col items-center" style={{ left: percent(mark.at) }}>
          <span className={`size-3 rounded-full border-[3px] bg-white ${mark.at <= value ? 'border-[#96dbfa]' : 'border-[#e9e9e9]'}`} />
          <span className={`mt-3 text-[18px] leading-5 ${mark.at <= value ? 'text-[#666]' : 'text-[#999]'}`}>{mark.text}</span>
        </div>
      ))}
      <span
        className="absolute top-0 size-[22px] -translate-x-1/2 rounded-full border-[3px] border-[#96dbfa] bg-white"
        style={{ left: percent(value) }}
      />
      <input
        id={id}
        type="range"
        aria-label={label}
        min={min}
        max={max}
        value={value}
        onChange={e => setValue(Number(e.target.value))}
        className="absolute inset-x-0 top-0 h-[22px] w-full cursor-pointer opacity-0"
      />
    </div>
  );
}

function ModeBar() {
  return (
    <div className="flex justify-end gap-6 pt-[14px] pr-[15px]">
      {toolGroups.map((group, i) => (
        <div key={i} className="flex gap-3">
          {group.map(icon => (
            <button key={icon.title} type="button" aria-label={icon.title}>
              <svg viewBox={`0 0 ${icon.width} 1000`} className={`block h-[25px] ${icon.size}`} fill={icon.color ?? '#b3bcd0'}>
                <path d={icon.path} transform={icon.transform ?? FLIP} />
              </svg>
            </button>
          ))}
        </div>
      ))}
    </div>
  );
}

function AreaMap() {
  return (
    <svg viewBox="798 39 1401 1261" className="block h-auto w-full" fontFamily="'DejaVu Sans', Verdana, sans-serif" fontSize="19">
      <defs>
        <clipPath id="haka">
          <path d="M1433 815H1452V850H1433ZM1500 815H1534V850H1500Z" />
        </clipPath>
      </defs>
      <g stroke="#eee" strokeWidth="2">
        {gridX.map(x => <path key={x} d={`M${x} 148V1262`} />)}
        {gridY.map(y => <path key={y} d={`M933 ${y}H2048`} />)}
      </g>
      <g stroke="#444" strokeWidth="2">
        {gridX.map(x => <path key={x} d={`M${x} 1264V1272`} />)}
        {gridY.map(y => <path key={y} d={`M923 ${y}H931`} />)}
      </g>

      <path d={LAND + COAST} fill="#fff" />
      <g transform={MID} fill="#ffa500">
        {targets.map(d => <path key={d} d={d} />)}
      </g>
      <g fill="#444">
        {mapLabels.map(label => (
          <text key={label.text} x={label.x} y={label.y}>{label.text}</text>
        ))}
        <path d={covers} transform={MID} fill="#fff" />
        {topLabels.map(label => (
          <text key={label.text} x={label.x} y={label.y}>{label.text}</text>
        ))}
        <text x="1438" y="835" clipPath="url(#haka)">Kruununhaka</text>
        <text x="1666" y="835" textAnchor="end">Etu-Töölö</text>
      </g>

      <g fill="none" strokeWidth="1.3" strokeLinejoin="round">
        <path d={LAND} stroke="#d8d8d8" />
        {borders.map(({ tile, d }) => (
          <path key={d} d={d} transform={tile} stroke="#ccc" vectorEffect="non-scaling-stroke" />
        ))}
        {shores.map(({ tile, d }) => (
          <path key={d} d={d} transform={tile} stroke="#d6d6d6" vectorEffect="non-scaling-stroke" />
        ))}
        {islets.map(({ tile, points }) => (
          <path key={tile} d={isletPath(points)} transform={tile} stroke="#cfcfcf" vectorEffect="non-scaling-stroke" />
        ))}
      </g>
    </svg>
  );
}

function ResultTable() {
  return (
    <table className="w-full table-fixed border-collapse font-['DejaVu_Sans',Verdana,sans-serif] text-[19px] leading-6 text-[#444]">
      <thead>
        <tr className="h-[62px] bg-[#c2d4ff]">
          {columns.map(column => (
            <th key={column} className="overflow-hidden border-2 border-[#8f8f8f] pt-[6px] pl-[11px] text-left align-top font-normal whitespace-nowrap">
              {column}
            </th>
          ))}
        </tr>
      </thead>
      <tbody>
        {rows.map(row => (
          <tr key={row.pono} className={`bg-[#f4f9ff] ${row.nimi.length === 4 ? 'h-[120px]' : row.nimi.length === 3 ? 'h-[94px]' : 'h-[47px]'}`}>
            <td className="overflow-hidden border-2 border-[#8f8f8f] pt-[6px] pl-[11px] align-top">{row.pono}</td>
            <td className={`overflow-hidden border-2 border-[#8f8f8f] pl-[11px] align-top whitespace-nowrap ${row.nimi.length > 1 ? 'pt-4' : 'pt-[6px]'}`}>
              {row.nimi.map(line => <div key={line}>{line}</div>)}
            </td>
            {row.values.map((value, i) => (
              <td key={i} className="overflow-hidden border-2 border-[#8f8f8f] pt-[6px] pl-[11px] align-top">{value}</td>
            ))}
          </tr>
        ))}
      </tbody>
    </table>
  );
}

export default function App() {
  const [moveType, setMoveType] = useState('target');
  const [count, setCount] = useState('10');

  return (
    <main className="relative flex h-screen items-start overflow-hidden bg-white font-['Liberation_Serif','Times_New_Roman',serif] text-[25px] leading-7 text-black">
      <section className="w-[calc(36%+2px)] shrink-0 pt-[33px] pl-[3px]">
        <div className="flex flex-col gap-[25px]">
          <AreaSelect id="origin" label="Select origin area:" />

          <p>Select move type:</p>
          <div className="flex items-center">
            <label className="flex items-center gap-[2px]">
              <input
                type="radio"
                name="move"
                checked={moveType === 'target'}
                onChange={() => setMoveType('target')}
                className="ml-[3px] size-[22px] appearance-none rounded-full border-2 border-[#c4c4c4] bg-white checked:border-8 checked:border-[#3b99fc]"
              />
              Move to target
            </label>
            <label className="flex items-center gap-[2px]">
              <input
                type="radio"
                name="move"
                checked={moveType === 'away'}
                onChange={() => setMoveType('away')}
                className="ml-[3px] size-[22px] appearance-none rounded-full border-2 border-[#c4c4c4] bg-white checked:border-8 checked:border-[#3b99fc]"
              />
              Move away from origin
            </label>
          </div>

          <label htmlFor="range">Select range in km:</label>
          <RangeSlider
            id="range"
            label="Range in km"
            min={20}
            max={500}
            initial={50}
            marks={[
              { at: 30, text: '30' },
              { at: 100, text: '100' },
              { at: 150, text: '150' },
              { at: 200, text: '200' },
              { at: 250, text: '250' },
              { at: 300, text: '300' },
              { at: 350, text: '350' },
              { at: 400, text: '400' },
              { at: 450, text: '450 km' },
            ]}
          />
        </div>

        <div className="flex flex-col gap-[25px]">
          <AreaSelect id="target" label="Select target area:" />
          <label htmlFor="price">What price per sq. meter can you accept at max?</label>
          <RangeSlider
            id="price"
            label="Price per square meter"
            min={0}
            max={7360}
            initial={7000}
            marks={[
              { at: 0, text: '' },
              { at: 1000, text: '1000' },
              { at: 2000, text: '2000' },
              { at: 3000, text: '3000' },
              { at: 4000, text: '4000' },
              { at: 5000, text: '5000 €' },
            ]}
          />
        </div>

        <div className="mb-[23px] flex h-7 items-center">
          <label htmlFor="alternatives">How many alternatives do you want:</label>
          <input
            id="alternatives"
            type="text"
            value={count}
            onChange={e => setCount(e.target.value)}
            className="h-7 w-[54px] border-2 border-[#ddd] bg-white px-[2px] font-['Liberation_Sans',Arial,sans-serif] text-[18px] leading-5"
          />
        </div>

        <ResultTable />
      </section>

      <section className="ml-1 min-w-0 flex-1">
        <ModeBar />
        <AreaMap />
      </section>

      <div className="pointer-events-none absolute inset-x-0 bottom-0 h-[64px] bg-linear-to-b from-black/0 to-black/8" />
    </main>
  );
}
